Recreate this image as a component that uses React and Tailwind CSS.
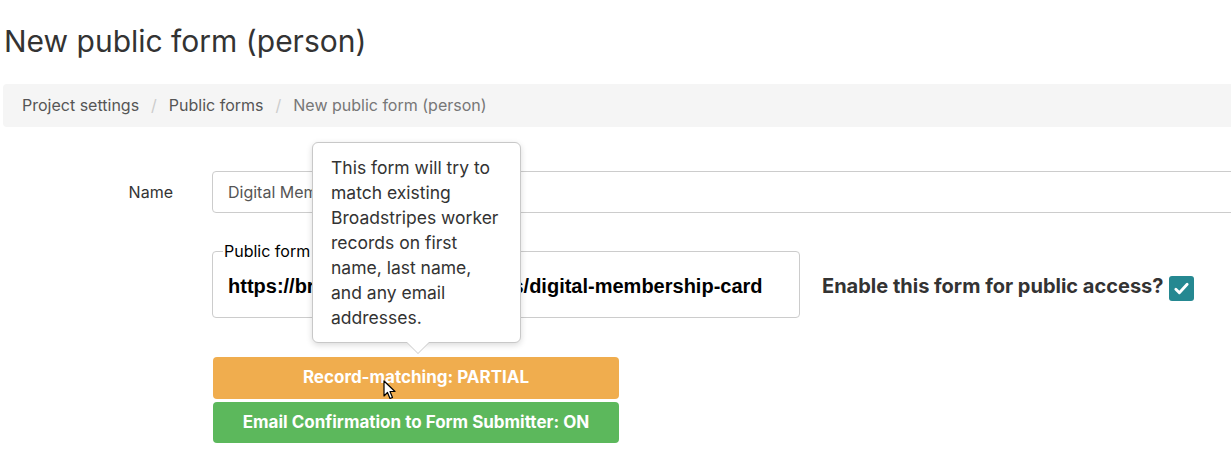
export default function App() {
  return (
    <div className="w-[1231px] h-[460px] overflow-hidden bg-white text-[#333]" style={{ fontFamily: 'Inter, "Noto Sans", sans-serif' }}>
      <div className="w-[1260px] pl-[4px]">
        <h1 className="pt-[23px] text-[30px] leading-[36px] font-normal text-[#333]">New public form (person)</h1>

        <nav className="mt-[25px] ml-[-1px] h-[43px] bg-[#f5f5f5] rounded-[4px] flex items-center pl-[19px] pb-[1px] text-[16px] text-[#555]">
          <span>Project settings</span>
          <span className="px-[12px] text-[#ccc]">/</span>
          <span>Public forms</span>
          <span className="px-[12px] text-[#ccc]">/</span>
          <span className="text-[#777]">New public form (person)</span>
        </nav>

        <div className="relative mt-[44px]">
          <div className="flex items-center">
            <label className="w-[208px] pr-[39px] text-right text-[16px] text-[#333]">Name</label>
            <div className="flex-1 h-[42px] border border-[#ccc] rounded-[4px] flex items-center pl-[15px] text-[16px] text-[#555]">
              Digital Membership Card
            </div>
          </div>

          <div className="flex items-center mt-[38px]">
            <div className="w-[208px]" />
            <fieldset className="w-[588px] h-[76px] border border-[#ccc] rounded-[4px] px-[15px] pb-[8px] mt-[-9px]">
              <legend className="ml-[-5px] px-[1px] text-[16px] leading-[18px] text-black">Public form link</legend>
              <div className="pt-[11px] text-[20px] font-bold text-black" style={{ fontFamily: '"Liberation Sans", Arial, sans-serif' }}>
                https://broadstripes.com/forms/digital-membership-card
              </div>
            </fieldset>
            <div className="ml-[22px] mt-[2px] flex items-center">
              <span className="text-[20px] font-bold text-[#333]">Enable this form for public access?</span>
              <span className="ml-[6px] mt-[6px] w-[25px] h-[25px] rounded-[3px] bg-[#258891] flex items-center justify-center">
                <svg width="17" height="17" viewBox="0 0 24 24" fill="none" stroke="white" strokeWidth="4" strokeLinecap="round" strokeLinejoin="round">
                  <path d="M4 13l5 5L20 6" />
                </svg>
              </span>
            </div>
          </div>

          <div className="ml-[209px] mt-[39px] w-[406px] flex flex-col gap-[3px]">
            <div className="relative h-[42px] rounded-[4px] bg-[#f0ad4e] flex items-center justify-center text-white text-[17px] font-bold">
              Record-matching: PARTIAL
              <svg className="absolute left-[170px] top-[23px]" width="13" height="20" viewBox="0 0 13 20">
                <path d="M1 1 L1 16 L4.5 12.5 L7 18.5 L9.5 17.5 L7 11.5 L12 11.5 Z" fill="white" stroke="black" strokeWidth="1.2" strokeLinejoin="round" />
              </svg>
            </div>
            <div className="h-[41px] rounded-[4px] bg-[#5cb85c] flex items-center justify-center text-white text-[17px] font-bold">
              Email Confirmation to Form Submitter: ON
            </div>
          </div>

          <div className="absolute left-[308px] top-[-29px] w-[209px] h-[201px] bg-white border border-[#c8c8c8] rounded-[6px] shadow-[0_2px_6px_rgba(0,0,0,0.15)] px-[18px] pt-[12px] text-[17.5px] leading-[25px] text-[#333]">
            This form will try to match existing Broadstripes worker records on first name, last name, and any email addresses.
            <div className="absolute left-[93px] bottom-[-12px] w-0 h-0 border-l-[12px] border-r-[12px] border-t-[12px] border-l-transparent border-r-transparent border-t-[#c8c8c8]" />
            <div className="absolute left-[94px] bottom-[-11px] w-0 h-0 border-l-[11px] border-r-[11px] border-t-[11px] border-l-transparent border-r-transparent border-t-white" />
          </div>
        </div>
      </div>
    </div>
  );
}
